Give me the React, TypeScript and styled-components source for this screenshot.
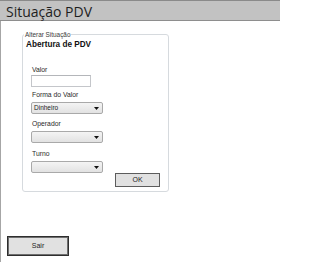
import React from "react";
import styled, { createGlobalStyle } from "styled-components";

const Global = createGlobalStyle`
  html, body { margin: 0; padding: 0; background: #ffffff; }
  body { font-family: "Liberation Sans", Arial, sans-serif; }
  #root { width: 280px; height: 262px; }
  * { box-sizing: border-box; }
`;

const Page = styled.div`
  width: 280px;
  height: 262px;
  display: flex;
  flex-direction: column;
  background: #ffffff;
  overflow: hidden;
`;

const TitleBar = styled.header`
  height: 21px;
  padding: 1px 0 0 6px;
  border-top: 1px solid #8a8a8a;
  border-bottom: 1px solid #8e8e8e;
  background: #c2c2c2;
  font-family: "Open Sans", "Liberation Sans", sans-serif;
  font-size: 14px;
  line-height: 19px;
  color: #1e1e1e;
  white-space: nowrap;
`;

const Body = styled.main`
  flex: 1;
  border-left: 1px solid #a6a6a6;
  display: flex;
  flex-direction: column;
  align-items: flex-start;
  padding-top: 13px;
`;

const Group = styled.section`
  position: relative;
  margin-left: 21px;
  width: 147px;
  height: 158px;
  border: 1px solid #d6dade;
  border-radius: 3px;
  padding: 5px 8px 0 3px;
  display: flex;
  flex-direction: column;
`;

const Legend = styled.span`
  position: absolute;
  top: -4px;
  left: 1px;
  padding: 0 1px;
  background: #ffffff;
  font-size: 6.4px;
  line-height: 7px;
  color: #3a3a3a;
  white-space: nowrap;
`;

const Heading = styled.h2`
  margin: 0;
  font-size: 8.2px;
  line-height: 10px;
  font-weight: bold;
  color: #111111;
  white-space: nowrap;
`;

const Fields = styled.div`
  margin: 15px 0 0 5px;
  display: flex;
  flex-direction: column;
  align-items: flex-start;
`;

const Field = styled.div<{ $mt: number }>`
  margin-top: ${(p) => p.$mt}px;
  display: flex;
  flex-direction: column;
  align-items: flex-start;
`;

const Label = styled.label<{ $gap: number }>`
  display: block;
  margin: 0 0 ${(p) => p.$gap}px 1px;
  font-size: 6.8px;
  line-height: 9px;
  color: #2a2a2a;
  white-space: nowrap;
`;

const TextBox = styled.div`
  width: 60px;
  height: 12px;
  border: 1px solid #c4c6ca;
  border-top-color: #b4b6ba;
  background: #ffffff;
`;

const SelectBox = styled.div`
  width: 72px;
  height: 12px;
  border: 1px solid #a9a9a9;
  border-radius: 2px;
  background: linear-gradient(#f4f4f4, #e2e2e2);
  display: flex;
  align-items: center;
  justify-content: space-between;
  padding: 0 3px 0 2px;
  font-size: 6.5px;
  line-height: 10px;
  color: #1e1e1e;
`;

const Arrow = styled.svg`
  width: 5px;
  height: 3px;
  display: block;
`;

const ButtonRow = styled.div`
  display: flex;
  justify-content: flex-end;
`;

const Button = styled.button<{ $w: number; $h: number; $strong?: boolean }>`
  width: ${(p) => p.$w}px;
  height: ${(p) => p.$h}px;
  padding: 0;
  margin: 0;
  border: 1px solid ${(p) => (p.$strong ? "#2e2e2e" : "#5c5c5c")};
  box-shadow: ${(p) => (p.$strong ? "inset 0 0 0 1px #6e6e6e" : "none")};
  background: #e1e1e1;
  font-family: "Liberation Sans", Arial, sans-serif;
  font-size: 7px;
  line-height: 10px;
  color: #1e1e1e;
`;

const SairButton = styled(Button)`
  margin: 44px 0 0 6px;
`;

type FieldDef = {
  label: string;
  kind: "text" | "select";
  value?: string;
  mt: number;
  gap: number;
};

const fields: FieldDef[] = [
  { label: "Valor", kind: "text", mt: 0, gap: 1 },
  { label: "Forma do Valor", kind: "select", value: "Dinheiro", mt: 3, gap: 3 },
  { label: "Operador", kind: "select", value: "", mt: 5, gap: 3 },
  { label: "Turno", kind: "select", value: "", mt: 6, gap: 3 },
];

export default function App() {
  return (
    <>
      <Global />
      <Page>
        <TitleBar>Situação PDV</TitleBar>
        <Body>
          <Group>
            <Legend>Alterar Situação</Legend>
            <Heading>Abertura de PDV</Heading>
            <Fields>
              {fields.map((f) => (
                <Field key={f.label} $mt={f.mt}>
                  <Label $gap={f.gap}>{f.label}</Label>
                  {f.kind === "text" ? (
                    <TextBox />
                  ) : (
                    <SelectBox>
                      <span>{f.value}</span>
                      <Arrow viewBox="0 0 5 3">
                        <polygon points="0,0 5,0 2.5,3" fill="#111" />
                      </Arrow>
                    </SelectBox>
                  )}
                </Field>
              ))}
            </Fields>
            <ButtonRow>
              <Button $w={45} $h={14}>OK</Button>
            </ButtonRow>
          </Group>
          <SairButton $w={62} $h={20} $strong>
            Sair
          </SairButton>
        </Body>
      </Page>
    </>
  );
}
